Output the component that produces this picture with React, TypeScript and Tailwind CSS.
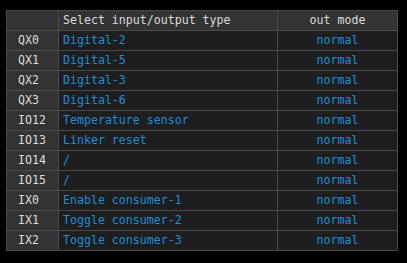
const rows: Array<[string, string]> = [
  ["QX0", "Digital-2"],
  ["QX1", "Digital-5"],
  ["QX2", "Digital-3"],
  ["QX3", "Digital-6"],
  ["IO12", "Temperature sensor"],
  ["IO13", "Linker reset"],
  ["IO14", "/"],
  ["IO15", "/"],
  ["IX0", "Enable consumer-1"],
  ["IX1", "Toggle consumer-2"],
  ["IX2", "Toggle consumer-3"],
];

export default function App() {
  return (
    <div className="w-[407px] h-[263px] bg-black pt-[10px] pl-[6px] font-['DejaVu_Sans_Mono',monospace] text-[11.6px] leading-none">
      <table className="border-collapse table-fixed w-[391px]">
        <colgroup>
          <col className="w-[52px]" />
          <col className="w-[219px]" />
          <col className="w-[120px]" />
        </colgroup>
        <thead>
          <tr className="h-[20px] bg-[#333333] text-[#dcdcdc]">
            <th className="border border-[#4a4a4a] p-0"></th>
            <th className="border border-[#4a4a4a] px-[4px] py-0 text-left font-normal">Select input/output type</th>
            <th className="border border-[#4a4a4a] p-0 text-center font-normal">out mode</th>
          </tr>
        </thead>
        <tbody>
          {rows.map(([id, name]) => (
            <tr key={id} className="h-[20px]">
              <td className="border border-[#4a4a4a] bg-[#333333] text-[#dcdcdc] pl-[11px] py-0">{id}</td>
              <td className="border border-[#4a4a4a] bg-[#1e1e1e] text-[#1c8ed6] px-[4px] py-0">{name}</td>
              <td className="border border-[#4a4a4a] bg-[#1e1e1e] text-[#1c8ed6] text-center p-0">normal</td>
            </tr>
          ))}
        </tbody>
      </table>
    </div>
  );
}
